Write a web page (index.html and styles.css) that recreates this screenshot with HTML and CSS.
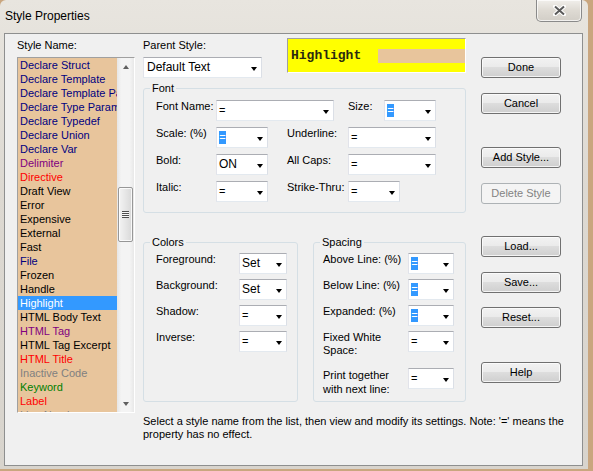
FILE: index.html
```html
<!DOCTYPE html>
<html>
<head>
<meta charset="utf-8">
<link rel="stylesheet" href="styles.css">
</head>
<body>
<div class="win">
  <div class="titlebar">
    <span class="title">Style Properties</span>
    <div class="close">
      <svg width="13" height="11" viewBox="0 0 13 11">
        <path d="M2 1.5 L11 9.5 M11 1.5 L2 9.5" stroke="#ffffff" stroke-width="4" stroke-linecap="round" fill="none"/>
        <path d="M2 1.5 L11 9.5 M11 1.5 L2 9.5" stroke="#5a5a5a" stroke-width="2" fill="none"/>
      </svg>
    </div>
  </div>
  <div class="client">
    <div class="leftcol">
      <div class="lbl lbl-top">Style Name:</div>
      <div class="listbox">
        <ul class="items">
          <li class="c-navy">Declare Struct</li>
          <li class="c-navy">Declare Template</li>
          <li class="c-navy">Declare Template Parameter</li>
          <li class="c-navy">Declare Type Parameter</li>
          <li class="c-navy">Declare Typedef</li>
          <li class="c-navy">Declare Union</li>
          <li class="c-navy">Declare Var</li>
          <li class="c-purple">Delimiter</li>
          <li class="c-red">Directive</li>
          <li>Draft View</li>
          <li>Error</li>
          <li>Expensive</li>
          <li>External</li>
          <li>Fast</li>
          <li class="c-navy">File</li>
          <li>Frozen</li>
          <li>Handle</li>
          <li class="sel">Highlight</li>
          <li>HTML Body Text</li>
          <li class="c-purple">HTML Tag</li>
          <li>HTML Tag Excerpt</li>
          <li class="c-red">HTML Title</li>
          <li class="c-gray">Inactive Code</li>
          <li class="c-green">Keyword</li>
          <li class="c-red">Label</li>
          <li class="c-gray">Line Number</li>
        </ul>
        <div class="vscroll">
          <div class="sbtn"><span class="tri-up"></span></div>
          <div class="track"><div class="thumb"><span class="grip"></span></div></div>
          <div class="sbtn"><span class="tri-down"></span></div>
        </div>
      </div>
    </div>

    <div class="maincol">
      <div class="upper">
        <div class="middle">
          <div class="header">
            <div class="parent">
              <div class="lbl lbl-top">Parent Style:</div>
              <div class="cb cb-parent"><span class="val val-wide">Default Text</span></div>
            </div>
            <div class="preview">
              <span class="pv-text">Highlight</span>
              <span class="pv-strip"></span>
            </div>
          </div>

          <fieldset class="group g-font">
            <legend>Font</legend>
            <div class="fgrid">
              <div class="lbl">Font Name:</div>
              <div class="cb w118 span2"><span class="val">=</span></div>
              <div class="lbl">Size:</div>
              <div class="cb w52"><span class="val"><span class="hl">=</span></span></div>

              <div class="lbl">Scale: (%)</div>
              <div class="cb w52"><span class="val"><span class="hl">=</span></span></div>
              <div class="lbl">Underline:</div>
              <div class="cb w88 span2"><span class="val">=</span></div>

              <div class="lbl">Bold:</div>
              <div class="cb w52"><span class="val val-wide">ON</span></div>
              <div class="lbl">All Caps:</div>
              <div class="cb w88 span2"><span class="val">=</span></div>

              <div class="lbl">Italic:</div>
              <div class="cb w52"><span class="val">=</span></div>
              <div class="lbl">Strike-Thru:</div>
              <div class="cb w52 span2"><span class="val">=</span></div>
            </div>
          </fieldset>

          <div class="lower">
            <fieldset class="group g-colors">
              <legend>Colors</legend>
              <div class="cgrid">
                <div class="lbl">Foreground:</div>
                <div class="cb"><span class="val val-wide">Set</span></div>
                <div class="lbl">Background:</div>
                <div class="cb"><span class="val val-wide">Set</span></div>
                <div class="lbl">Shadow:</div>
                <div class="cb"><span class="val">=</span></div>
                <div class="lbl">Inverse:</div>
                <div class="cb"><span class="val">=</span></div>
              </div>
            </fieldset>
            <fieldset class="group g-spacing">
              <legend>Spacing</legend>
              <div class="sgrid">
                <div class="lbl">Above Line: (%)</div>
                <div class="cb"><span class="val"><span class="hl">=</span></span></div>
                <div class="lbl">Below Line: (%)</div>
                <div class="cb"><span class="val"><span class="hl">=</span></span></div>
                <div class="lbl">Expanded: (%)</div>
                <div class="cb"><span class="val"><span class="hl">=</span></span></div>
                <div class="lbl">Fixed White<br>Space:</div>
                <div class="cb"><span class="val">=</span></div>
                <div class="lbl lbl-last">Print together<br>with next line:</div>
                <div class="cb cb-last"><span class="val">=</span></div>
              </div>
            </fieldset>
          </div>
        </div>

        <div class="buttons">
          <div class="btn b-done">Done</div>
          <div class="btn b-cancel">Cancel</div>
          <div class="btn b-add">Add Style...</div>
          <div class="btn b-del disabled">Delete Style</div>
          <div class="btn b-load">Load...</div>
          <div class="btn b-save">Save...</div>
          <div class="btn b-reset">Reset...</div>
          <div class="btn b-help">Help</div>
        </div>
      </div>
      <p class="note">Select a style name from the list, then view and modify its settings. Note: '=' means the property has no effect.</p>
    </div>
  </div>
</div>
</body>
</html>
```

FILE: styles.css
```css
html, body {
  margin: 0;
  padding: 0;
}
body {
  background: #c9a67f;
  font-family: "Liberation Sans", Arial, sans-serif;
  font-size: 11px;
  color: #000;
  width: 593px;
  height: 471px;
  overflow: hidden;
}

.win {
  width: 588px;
  height: 469px;
  background: linear-gradient(#e8e5df, #ddd9d2 40%, #d8d4cd);
  border-radius: 6px 6px 0 0;
  display: flex;
  flex-direction: column;
}

.titlebar {
  height: 33px;
  display: flex;
  justify-content: space-between;
  flex: none;
}
.title {
  font-size: 12px;
  line-height: 33px;
  padding-left: 5px;
  color: #000;
}
.close {
  width: 46px;
  height: 22px;
  box-sizing: border-box;
  margin-right: 6px;
  border: 1px solid #8a8a8a;
  border-top: none;
  border-radius: 0 0 5px 5px;
  background: linear-gradient(#f1efeb, #dedad3 50%, #d2cec7);
  box-shadow: inset 0 0 0 1px rgba(255, 255, 255, 0.7);
  display: flex;
  align-items: center;
  justify-content: center;
}

.client {
  margin-left: 4px;
  width: 579px;
  height: 433px;
  box-sizing: border-box;
  border: 1px solid #8e8f8f;
  background: #f0f0f0;
  display: flex;
  padding: 4px 0 0 12px;
  flex: none;
}

.lbl {
  line-height: 13px;
  white-space: nowrap;
}
.lbl-top {
  margin-top: 1px;
  margin-bottom: 5px;
}

/* ---------- list ---------- */
.leftcol {
  width: 118px;
  flex: none;
}
.listbox {
  height: 356px;
  box-sizing: border-box;
  border: 1px solid;
  border-color: #a0a0a0 #ffffff #ffffff #a0a0a0;
  background: #e8c59c;
  display: flex;
  overflow: hidden;
}
.items {
  flex: 1;
  margin: 0;
  padding: 0;
  list-style: none;
  overflow: hidden;
  min-width: 0;
}
.items li {
  height: 14px;
  line-height: 14px;
  padding-left: 2px;
  white-space: nowrap;
  overflow: hidden;
}
.c-navy { color: #000080; }
.c-purple { color: #800080; }
.c-red { color: #ff0000; }
.c-gray { color: #808080; }
.c-green { color: #008000; }
.items li.sel {
  background: #3399ff;
  color: #ffffff;
}

.vscroll {
  width: 17px;
  flex: none;
  display: flex;
  flex-direction: column;
  background: linear-gradient(to right, #e6e6e6, #f4f4f4 25%, #f4f4f4 75%, #e8e8e8);
}
.sbtn {
  height: 17px;
  flex: none;
  display: flex;
  align-items: center;
  justify-content: center;
}
.tri-up {
  width: 0;
  height: 0;
  border-left: 3.5px solid transparent;
  border-right: 3.5px solid transparent;
  border-bottom: 4px solid #606060;
}
.tri-down {
  width: 0;
  height: 0;
  border-left: 3.5px solid transparent;
  border-right: 3.5px solid transparent;
  border-top: 4px solid #606060;
}
.track {
  flex: 1;
}
.thumb {
  margin: 112px 1px 0 1px;
  height: 55px;
  box-sizing: border-box;
  border: 1px solid #979797;
  border-radius: 2px;
  background: linear-gradient(to right, #f3f3f3, #e6e6e6 50%, #d8d8d8);
  box-shadow: inset 0 0 0 1px rgba(255, 255, 255, 0.8);
  display: flex;
  align-items: center;
  justify-content: center;
}
.grip {
  width: 7px;
  height: 7px;
  background: repeating-linear-gradient(#4e4e4e 0 1px, #f8f8f8 1px 2px);
}

/* ---------- main ---------- */
.maincol {
  margin-left: 8px;
  display: flex;
  flex-direction: column;
}
.upper {
  display: flex;
}
.middle {
  width: 323px;
  flex: none;
}
.header {
  display: flex;
  height: 39px;
}
.parent {
  width: 119px;
}
.preview {
  margin-left: 25px;
  width: 179px;
  height: 35px;
  box-sizing: border-box;
  border: 1px solid;
  border-color: #a0a0a0 #ffffff #ffffff #a0a0a0;
  background: #ffff00;
  display: flex;
  align-items: center;
}
.pv-text {
  font-family: "Liberation Mono", "Courier New", monospace;
  font-weight: bold;
  font-size: 13px;
  color: #2a2a10;
  padding-left: 3px;
  margin-top: -1px;
}
.pv-strip {
  margin-left: auto;
  width: 87px;
  height: 14px;
  background: #e8c59c;
}

/* combo boxes */
.cb {
  height: 21px;
  box-sizing: border-box;
  border: 1px solid;
  border-color: #abadb3 #dbdfe6 #e3e9ef #e2e3ea;
  background: #ffffff;
  display: flex;
  align-items: center;
}
.cb::after {
  content: "";
  margin-left: auto;
  margin-right: 4px;
  margin-top: 2px;
  width: 0;
  height: 0;
  border-left: 3.5px solid transparent;
  border-right: 3.5px solid transparent;
  border-top: 4px solid #000000;
}
.val {
  padding-left: 2px;
  line-height: 13px;
  margin-top: -1px;
  white-space: nowrap;
}
.val-wide {
  padding-left: 2px;
  font-size: 12px;
}
.cb-parent .val-wide {
  padding-left: 3px;
}
.hl {
  display: inline-block;
  width: 7px;
  text-align: center;
  background: #3399ff;
  color: #ffffff;
  line-height: 13px;
}
.cb-parent {
  width: 119px;
}
.w118 { width: 118px; }
.w88 { width: 88px; }
.w52 { width: 52px; }
.span2 { grid-column: span 2; }

/* group boxes */
.group {
  margin: 0;
  min-width: 0;
  border: 1px solid #d5dfe5;
  border-radius: 3px;
  box-sizing: border-box;
}
.group legend {
  padding: 0 2px;
  line-height: 13px;
  font-size: 11px;
}
.g-font {
  margin-top: 5px;
  width: 323px;
  padding: 5px 0 10px 12px;
}
.g-font legend,
.g-colors legend {
  margin-left: -6px;
}
.g-spacing legend {
  margin-left: -3px;
}
.fgrid {
  display: grid;
  grid-template-columns: 60px 71px 61px 36px 52px;
  grid-auto-rows: 21px;
  row-gap: 6px;
}
.fgrid .cb,
.cgrid .cb,
.sgrid .cb {
  justify-self: start;
}

.lower {
  display: flex;
  gap: 15px;
  margin-top: 23px;
}
.g-colors {
  width: 155px;
  padding: 4px 0 7px 12px;
}
.cgrid {
  display: grid;
  grid-template-columns: 83px 48px;
  grid-auto-rows: 21px;
  row-gap: 5px;
}
.cgrid .cb { width: 48px; }
.g-spacing {
  width: 153px;
  padding: 4px 0 7px 9px;
}
.sgrid {
  display: grid;
  grid-template-columns: 85px 46px;
  grid-template-rows: 21px 21px 21px 26px 32px;
  row-gap: 5px;
}
.sgrid .cb { width: 46px; }
.lbl-last,
.cb-last {
  margin-top: 6px;
}
.lbl-last { line-height: 14px; }

/* buttons */
.buttons {
  margin-left: 15px;
  width: 80px;
  flex: none;
  display: flex;
  flex-direction: column;
}
.btn {
  height: 21px;
  box-sizing: border-box;
  border: 1px solid #707070;
  border-radius: 3px;
  background: linear-gradient(#f2f2f2, #ebebeb 45%, #dddddd 50%, #cfcfcf);
  box-shadow: inset 0 0 0 1px rgba(252, 252, 252, 0.8);
  text-align: center;
  line-height: 19px;
  white-space: nowrap;
}
.btn.disabled {
  border-color: #adb2b5;
  background: #f4f4f4;
  color: #838383;
  box-shadow: none;
}
.b-done { margin-top: 19px; }
.b-cancel { margin-top: 15px; }
.b-add { margin-top: 33px; }
.b-del { margin-top: 15px; }
.b-load { margin-top: 32px; }
.b-save { margin-top: 15px; }
.b-reset { margin-top: 14px; }
.b-help { margin-top: 34px; }

.note {
  margin: 13px 0 0 0;
  width: 425px;
  line-height: 13px;
}
```
